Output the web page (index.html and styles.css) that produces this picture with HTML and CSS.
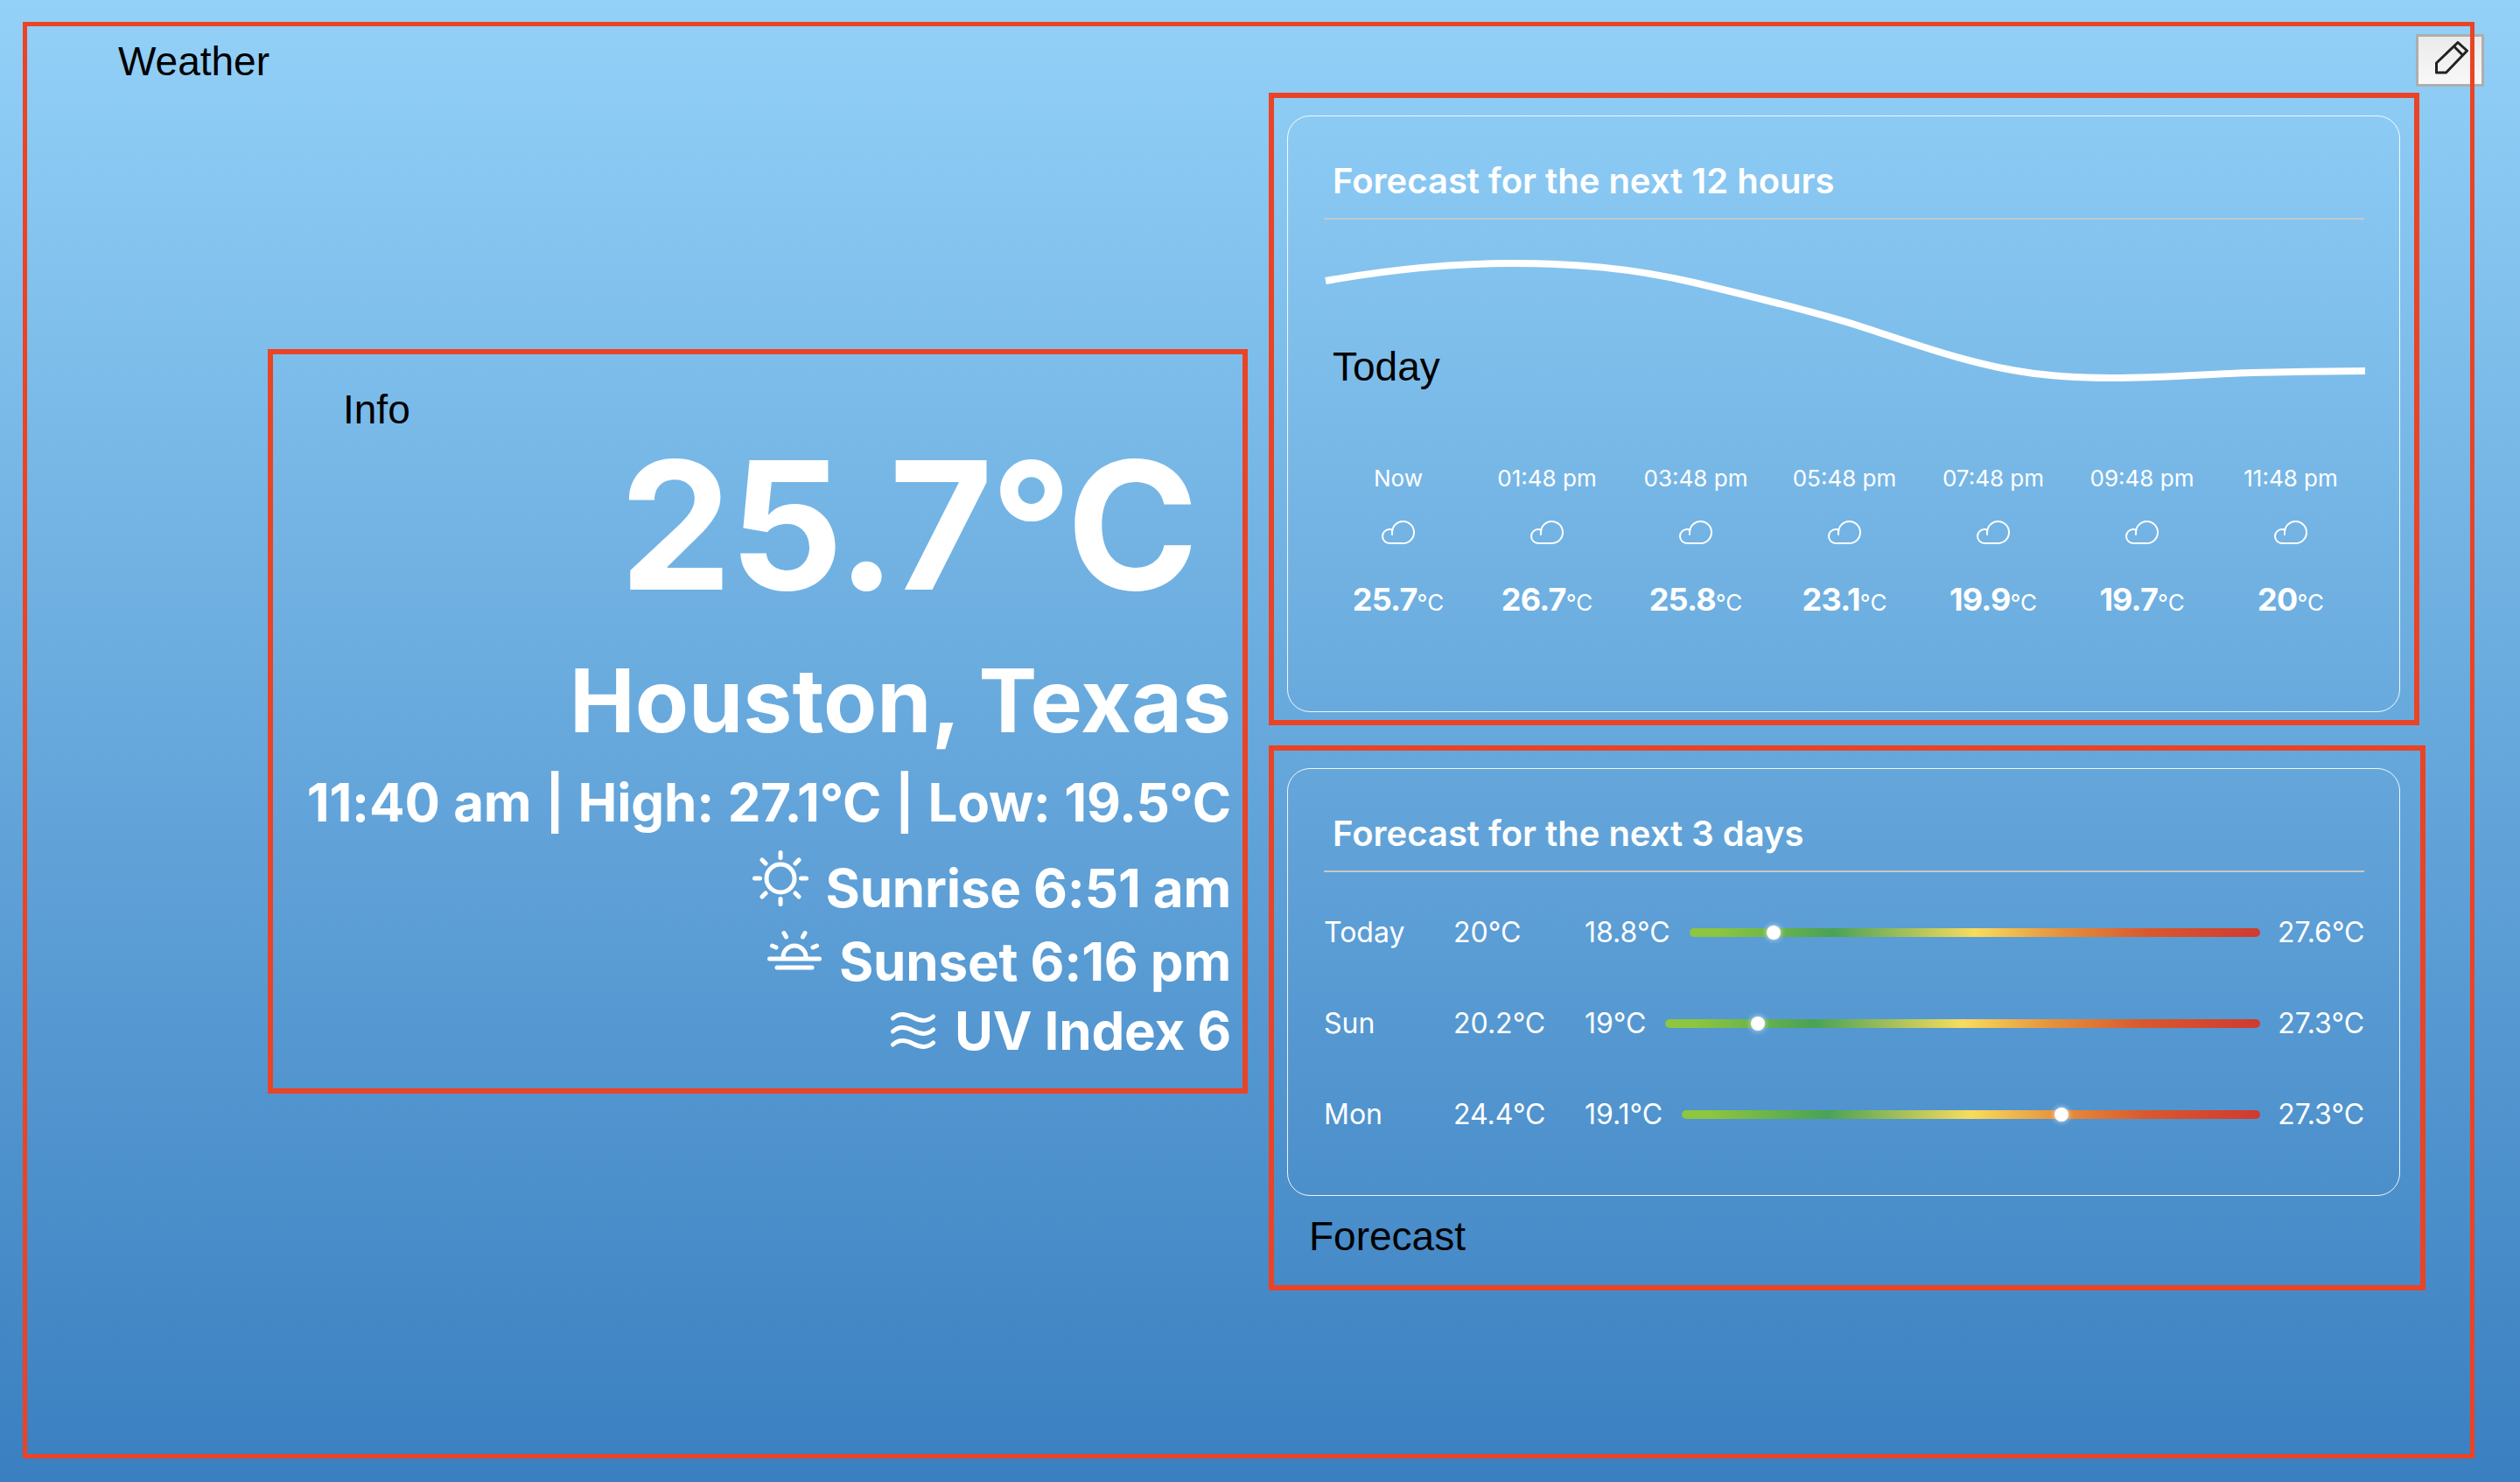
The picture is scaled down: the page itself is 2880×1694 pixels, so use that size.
FILE: index.html
```html
<!DOCTYPE html>
<html lang="en">
<head>
    <meta charset="UTF-8">
    <title>Weather</title>
    <link rel="stylesheet" href="styles.css">
</head>
<body>
    <main class="weather">
        <div class="region-label weather-label">Weather</div>
        <button class="edit-btn" type="button" aria-label="Edit">
            <svg width="38" height="38" viewBox="0 0 38 38" fill="none" stroke="#222" stroke-width="3" stroke-linejoin="round">
                <path d="M1.500 25 L1.500 36 L12.500 36 L36.500 11 L26 1.500 Z"/>
                <path d="M21.500 6 L31.500 16"/>
            </svg>
        </button>

        <div class="columns">
            <section class="info">
                <div class="region-label info-label">Info</div>
                <div class="temp-now">25.7°C</div>
                <div class="city">Houston, Texas</div>
                <div class="info-line summary">11:40 am | High: 27.1°C | Low: 19.5°C</div>
                <div class="info-line sunrise">
                    <svg class="sun-icon" width="64" height="64" viewBox="0 0 64 64" fill="none" stroke="#fff" stroke-width="5" stroke-linecap="round">
                        <circle cx="32" cy="32" r="16"/>
                        <path d="M32 2.500V8.500M32 55.500V61.500M2.500 32H8.500M55.500 32H61.500M11 11L15 15M49 49L53 53M11 53L15 49M49 15L53 11"/>
                    </svg>
                    <span>Sunrise 6:51 am</span>
                </div>
                <div class="info-line sunset">
                    <svg class="set-icon" width="62" height="46" viewBox="0 0 62 46" fill="none" stroke="#fff" stroke-width="5" stroke-linecap="round">
                        <path d="M2.500 33H59.500M11 43H51M18 31A13 13 0 0 1 44 31"/>
                        <path d="M19 3.500L21.500 8M43 3.500L40.500 8M5.500 18L10 20M56.500 18L52 20"/>
                    </svg>
                    <span>Sunset 6:16 pm</span>
                </div>
                <div class="info-line uv">
                    <svg width="51" height="42" viewBox="0 0 51 42" fill="none" stroke="#fff" stroke-width="5" stroke-linecap="round">
                        <path d="M2.500 7C9 1 16 1 25.500 6S42 11 48.500 5"/>
                        <path d="M2.500 22C9 16 16 16 25.500 21S42 26 48.500 20"/>
                        <path d="M2.500 37C9 31 16 31 25.500 36S42 41 48.500 35"/>
                    </svg>
                    <span>UV Index 6</span>
                </div>
            </section>

            <div class="forecasts">
                <section class="today-box">
                    <div class="card hours-card">
                        <h2 class="card-title">Forecast for the next 12 hours</h2>
                        <div class="chart">
                            <svg width="1190" height="281" viewBox="0 0 1190 281" fill="none">
                                <path d="M2 70C70 58 140 50 216 50C285 50 350 55 423 72C490 88 560 105 616 123C677 143 738 165 799 174C830 179 860 181 900 181C960 181 1000 177 1060 175C1100 174 1150 173.500 1190 173" stroke="#fff" stroke-width="8"/>
                            </svg>
                            <div class="region-label chart-label">Today</div>
                        </div>
                        <div class="hours">
                            <div class="hour">
                                <div class="hour-time">Now</div>
                                <svg class="cloud" width="38" height="27" viewBox="0 0 38 27"><path d="M12 16V13.500A12.500 12.500 0 1 1 24.500 26H9A8 8 0 0 1 9 10A8 8 0 0 1 12.600 10.900"/></svg>
                                <div class="hour-temp">25.7<span class="unit">°C</span></div>
                            </div>
                            <div class="hour">
                                <div class="hour-time">01:48 pm</div>
                                <svg class="cloud" width="38" height="27" viewBox="0 0 38 27"><path d="M12 16V13.500A12.500 12.500 0 1 1 24.500 26H9A8 8 0 0 1 9 10A8 8 0 0 1 12.600 10.900"/></svg>
                                <div class="hour-temp">26.7<span class="unit">°C</span></div>
                            </div>
                            <div class="hour">
                                <div class="hour-time">03:48 pm</div>
                                <svg class="cloud" width="38" height="27" viewBox="0 0 38 27"><path d="M12 16V13.500A12.500 12.500 0 1 1 24.500 26H9A8 8 0 0 1 9 10A8 8 0 0 1 12.600 10.900"/></svg>
                                <div class="hour-temp">25.8<span class="unit">°C</span></div>
                            </div>
                            <div class="hour">
                                <div class="hour-time">05:48 pm</div>
                                <svg class="cloud" width="38" height="27" viewBox="0 0 38 27"><path d="M12 16V13.500A12.500 12.500 0 1 1 24.500 26H9A8 8 0 0 1 9 10A8 8 0 0 1 12.600 10.900"/></svg>
                                <div class="hour-temp">23.1<span class="unit">°C</span></div>
                            </div>
                            <div class="hour">
                                <div class="hour-time">07:48 pm</div>
                                <svg class="cloud" width="38" height="27" viewBox="0 0 38 27"><path d="M12 16V13.500A12.500 12.500 0 1 1 24.500 26H9A8 8 0 0 1 9 10A8 8 0 0 1 12.600 10.900"/></svg>
                                <div class="hour-temp">19.9<span class="unit">°C</span></div>
                            </div>
                            <div class="hour">
                                <div class="hour-time">09:48 pm</div>
                                <svg class="cloud" width="38" height="27" viewBox="0 0 38 27"><path d="M12 16V13.500A12.500 12.500 0 1 1 24.500 26H9A8 8 0 0 1 9 10A8 8 0 0 1 12.600 10.900"/></svg>
                                <div class="hour-temp">19.7<span class="unit">°C</span></div>
                            </div>
                            <div class="hour">
                                <div class="hour-time">11:48 pm</div>
                                <svg class="cloud" width="38" height="27" viewBox="0 0 38 27"><path d="M12 16V13.500A12.500 12.500 0 1 1 24.500 26H9A8 8 0 0 1 9 10A8 8 0 0 1 12.600 10.900"/></svg>
                                <div class="hour-temp">20<span class="unit">°C</span></div>
                            </div>
                        </div>
                    </div>
                </section>

                <section class="forecast-box">
                    <div class="card days-card">
                        <h2 class="card-title">Forecast for the next 3 days</h2>
                        <div class="days">
                            <div class="day">
                                <div class="day-name">Today</div>
                                <div class="day-temp">20°C</div>
                                <div class="day-low">18.8°C</div>
                                <div class="bar"><span class="bar-dot" style="left: 14.8%"></span></div>
                                <div class="day-high">27.6°C</div>
                            </div>
                            <div class="day">
                                <div class="day-name">Sun</div>
                                <div class="day-temp">20.2°C</div>
                                <div class="day-low">19°C</div>
                                <div class="bar"><span class="bar-dot" style="left: 15.6%"></span></div>
                                <div class="day-high">27.3°C</div>
                            </div>
                            <div class="day">
                                <div class="day-name">Mon</div>
                                <div class="day-temp">24.4°C</div>
                                <div class="day-low">19.1°C</div>
                                <div class="bar"><span class="bar-dot" style="left: 65.7%"></span></div>
                                <div class="day-high">27.3°C</div>
                            </div>
                        </div>
                    </div>
                    <div class="region-label forecast-label">Forecast</div>
                </section>
            </div>
        </div>
    </main>
</body>
</html>
```

FILE: styles.css
```css
html, body {
    margin: 0;
    height: 100%;
}

body {
    background: linear-gradient(to bottom, #93d1f8, #3a7fc0);
    font-family: "Inter", sans-serif;
    color: #fff;
    overflow: hidden;
}

.weather {
    position: relative;
    box-sizing: border-box;
    width: 2802px;
    height: 1642px;
    margin: 25px 0 0 26px;
    padding-top: 18px;
}

/* the red frame runs over the edit button */
.weather::after {
    content: "";
    position: absolute;
    inset: 0;
    border: 5px solid #ea4326;
    pointer-events: none;
}

.region-label {
    font-family: "Liberation Sans", Arial, sans-serif;
    font-size: 46px;
    line-height: 54px;
    color: #000;
}

.weather-label {
    padding-left: 109px;
}

.edit-btn {
    position: absolute;
    top: 14px;
    right: -11px;
    box-sizing: border-box;
    width: 78px;
    height: 60px;
    padding: 0 0 7px 3px;
    display: flex;
    align-items: center;
    justify-content: center;
    background: linear-gradient(to bottom, #ebebeb, #f8f8f8);
    border: 3px solid #aeaeae;
}

.columns {
    display: flex;
    align-items: flex-start;
    gap: 24px;
    margin-top: 9px;
    padding-left: 280px;
}

.info {
    box-sizing: border-box;
    width: 1120px;
    height: 851px;
    margin-top: 293px;
    padding: 36px 13px 0 80px;
    border: 6px solid #ea4326;
    text-align: right;
}

.info-label {
    text-align: left;
}

.temp-now {
    margin-top: 5px;
    padding-right: 40px;
    font-size: 204px;
    line-height: 200px;
    font-weight: 700;
    letter-spacing: -3px;
}

.city {
    margin-top: 51px;
    font-size: 100px;
    line-height: 100px;
    font-weight: 700;
}

.info-line {
    display: flex;
    justify-content: flex-end;
    align-items: center;
    gap: 20px;
    font-size: 60px;
    line-height: 70px;
    font-weight: 700;
    letter-spacing: -0.15px;
    white-space: nowrap;
}

.summary {
    margin-top: 31px;
    word-spacing: 1.4px;
}

.sunrise {
    margin-top: 28px;
}

.sunset {
    margin-top: 14px;
}

.uv {
    margin-top: 9px;
    gap: 22px;
}

.sun-icon {
    transform: translateY(-11px);
}

.set-icon {
    transform: translateY(-13px);
}

.forecasts {
    width: 1322px;
}

.today-box {
    box-sizing: border-box;
    width: 1315px;
    height: 723px;
    padding: 20px 0 0 15px;
    border: 6px solid #ea4326;
}

.forecast-box {
    box-sizing: border-box;
    height: 623px;
    margin-top: 23px;
    padding: 20px 0 0 15px;
    border: 6px solid #ea4326;
}

.card {
    box-sizing: border-box;
    width: 1272px;
    padding: 49px 40px 0 41px;
    border: 1px solid rgba(255, 255, 255, 0.9);
    border-radius: 26px;
}

.hours-card {
    height: 682px;
}

.days-card {
    height: 489px;
}

.card-title {
    margin: 0;
    padding: 0 0 17px 10px;
    border-bottom: 2px solid #c4c8cc;
    font-size: 40px;
    line-height: 50px;
    font-weight: 600;
}

.chart {
    position: relative;
    height: 281px;
}

.chart svg {
    display: block;
}

.chart-label {
    position: absolute;
    left: 10px;
    top: 141px;
}

.hours {
    display: grid;
    grid-template-columns: repeat(7, 170px);
    text-align: center;
}

.hour-time {
    font-size: 26px;
    line-height: 30px;
}

.cloud {
    display: block;
    margin: 33px auto 0;
    fill: none;
    stroke: #fff;
    stroke-width: 2;
    stroke-linecap: round;
}

.hour-temp {
    margin-top: 41px;
    font-size: 36px;
    line-height: 44px;
    font-weight: 700;
    letter-spacing: -0.8px;
}

.unit {
    font-size: 26px;
    font-weight: 400;
    letter-spacing: 0;
}

.days {
    display: flex;
    flex-direction: column;
    gap: 64px;
    margin-top: 49px;
}

.day {
    display: flex;
    align-items: center;
    font-size: 32px;
    line-height: 40px;
}

.day-name {
    width: 148px;
}

.day-temp {
    width: 150px;
}

.day-low {
    margin-right: 22px;
}

.bar {
    position: relative;
    flex: 1;
    height: 10px;
    margin-right: 20px;
    border-radius: 5px;
    background: linear-gradient(to right, #8dc63f 0%, #8dc63f 5%, #49a256 25%, #f8dc5d 50%, #e6913b 65%, #d9592e 80%, #cf3a30 100%);
}

.bar-dot {
    position: absolute;
    top: -3px;
    width: 16px;
    height: 16px;
    margin-left: -8px;
    border-radius: 50%;
    background: #fff;
    box-shadow: 0 0 6px rgba(255, 255, 255, 0.8);
}

.day-high {
    width: 99px;
    text-align: right;
}

.forecast-label {
    margin: 19px 0 0 25px;
}
```
